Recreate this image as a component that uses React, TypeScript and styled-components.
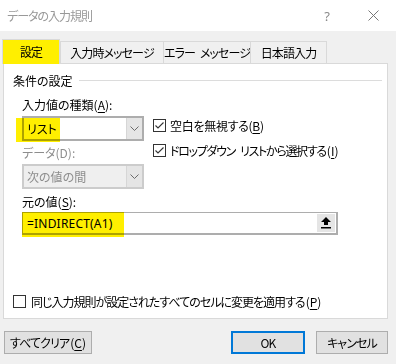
import React from "react";
import styled, { createGlobalStyle } from "styled-components";

const GlobalStyle = createGlobalStyle`
  html, body {
    margin: 0;
    padding: 0;
  }
  body {
    width: 396px;
    height: 364px;
    overflow: hidden;
    background: #f0f0f0;
    font-family: "Noto Sans CJK JP", "Noto Sans", sans-serif;
    font-size: 12px;
    font-feature-settings: "palt" 1;
    color: #000;
  }
`;

const Window = styled.div`
  width: 396px;
  height: 364px;
  display: flex;
  flex-direction: column;
  background: #f0f0f0;
`;

const TitleBar = styled.div`
  height: 31px;
  flex-shrink: 0;
  display: flex;
  align-items: center;
  background: #fff;
`;

const Title = styled.div`
  flex: 1;
  padding-left: 7px;
  color: #999;
  line-height: 16px;
  letter-spacing: -1px;
`;

const CaptionButton = styled.div`
  width: 46px;
  height: 31px;
  display: flex;
  align-items: center;
  justify-content: center;
  color: #8a8a8a;
  font-family: "Noto Sans", sans-serif;
  font-size: 13px;
`;

const Body = styled.div`
  flex: 1;
  padding: 8px 8px 0 2px;
  display: flex;
  flex-direction: column;
`;

const TabStrip = styled.div`
  height: 25px;
  display: flex;
  align-items: flex-end;
  margin-bottom: -1px;
  position: relative;
  z-index: 1;
`;

const Tab = styled.div<{ $active?: boolean; $w: number }>`
  width: ${(p) => p.$w}px;
  box-sizing: border-box;
  height: ${(p) => (p.$active ? 25 : 22)}px;
  margin-bottom: ${(p) => (p.$active ? 0 : 1)}px;
  margin-left: ${(p) => (p.$active ? 0 : -1)}px;
  &:nth-child(2) {
    margin-left: 0;
  }
  border: 1px solid #d9d9d9;
  border-bottom: none;
  background: ${(p) => (p.$active ? "#ffef00" : "#f0f0f0")};
  display: flex;
  align-items: center;
  justify-content: center;
  padding-bottom: ${(p) => (p.$active ? 2 : 0)}px;
  letter-spacing: -0.9px;
  white-space: nowrap;
`;

const Panel = styled.div`
  height: 256px;
  box-sizing: border-box;
  margin-left: 1px;
  background: #fff;
  border: 1px solid #d9d9d9;
  display: flex;
  flex-direction: column;
`;

const GroupHeader = styled.div`
  margin-top: 8px;
  height: 16px;
  padding-left: 9px;
  padding-right: 5px;
  display: flex;
  align-items: center;
  &::after {
    content: "";
    flex: 1;
    height: 1px;
    margin-left: 6px;
    background: #dcdcdc;
  }
`;

const Form = styled.div`
  padding-left: 18px;
  margin-top: 9px;
  display: flex;
  flex-direction: column;
`;

const Columns = styled.div`
  display: flex;
`;

const LeftCol = styled.div`
  width: 122px;
  display: flex;
  flex-direction: column;
`;

const RightCol = styled.div`
  margin-left: 9px;
  padding-top: 20px;
  display: flex;
  flex-direction: column;
  gap: 9px;
`;

const Label = styled.div<{ $disabled?: boolean; $gap?: number }>`
  height: 16px;
  line-height: 16px;
  margin-top: ${(p) => p.$gap ?? 0}px;
  color: ${(p) => (p.$disabled ? "#8d8d8d" : "#000")};
  white-space: nowrap;
`;

const Key = styled.span`
  text-decoration: underline;
  text-underline-offset: 2px;
`;

const Paren = styled.span`
  letter-spacing: 0;
  margin-left: 1px;
`;

const WordGap = styled.span`
  display: inline-block;
  width: 5px;
`;

const Combo = styled.div<{ $disabled?: boolean }>`
  position: relative;
  margin-top: 3px;
  height: 25px;
  box-sizing: border-box;
  border: 2px solid ${(p) => (p.$disabled ? "#cccccc" : "#adadad")};
  background: ${(p) => (p.$disabled ? "#efefef" : "#fff")};
  color: ${(p) => (p.$disabled ? "#8d8d8d" : "#000")};
  display: flex;
  align-items: center;
`;

const ComboText = styled.div`
  flex: 1;
  padding-left: 3px;
  position: relative;
  z-index: 1;
`;

const ComboArrow = styled.div`
  width: 15px;
  align-self: stretch;
  border-left: 1px solid #d6d6d6;
  background: #e5e5e5;
  display: flex;
  align-items: center;
  justify-content: center;
`;

const Marker = styled.div<{ $l: number; $t: number; $w: number; $h: number }>`
  position: absolute;
  left: ${(p) => p.$l}px;
  top: ${(p) => p.$t}px;
  width: ${(p) => p.$w}px;
  height: ${(p) => p.$h}px;
  background: #ffef00;
  mix-blend-mode: multiply;
  pointer-events: none;
`;

const CheckRow = styled.div<{ $ls?: number }>`
  height: 16px;
  display: flex;
  align-items: center;
  gap: 4px;
  white-space: nowrap;
  letter-spacing: ${(p) => p.$ls ?? 0}px;
`;

const SourceBox = styled.div`
  position: relative;
  margin-top: 2px;
  width: 316px;
  height: 23px;
  box-sizing: border-box;
  border: 2px solid #adadad;
  border-left-width: 1px;
  border-top-width: 1px;
  background: #fff;
  display: flex;
  align-items: center;
`;

const SourceText = styled.div`
  flex: 1;
  padding-left: 4px;
  font-family: "Noto Sans", "Noto Sans CJK JP", sans-serif;
  font-size: 12px;
  letter-spacing: 0.2px;
`;

const RefButton = styled.div`
  width: 18px;
  height: 18px;
  margin-right: 1px;
  background: #e5e5e5;
  display: flex;
  align-items: center;
  justify-content: center;
`;

const BottomCheck = styled(CheckRow)`
  margin-top: auto;
  margin-bottom: 9px;
  padding-left: 9px;
  gap: 5px;
`;

const Footer = styled.div`
  margin-top: 12px;
  display: flex;
  align-items: center;
  padding-left: 2px;
`;

const Button = styled.div<{ $primary?: boolean; $w: number }>`
  width: ${(p) => p.$w}px;
  height: 23px;
  box-sizing: border-box;
  border: ${(p) => (p.$primary ? "2px solid #0078d7" : "1px solid #adadad")};
  background: #e1e1e1;
  display: flex;
  align-items: center;
  justify-content: center;
  white-space: nowrap;
  letter-spacing: -0.9px;
  & + & {
    margin-left: 11px;
  }
`;

const Spacer = styled.div`
  flex: 1;
`;

const Chevron = () => (
  <svg width="9" height="5" viewBox="0 0 9 5">
    <polyline points="0.5,0.5 4.5,4.5 8.5,0.5" fill="none" stroke="#6b6b6b" strokeWidth="1" />
  </svg>
);

const CheckBox = ({ checked }: { checked?: boolean }) => (
  <svg width="13" height="13" viewBox="0 0 13 13" style={{ flexShrink: 0 }}>
    <rect x="0.5" y="0.5" width="12" height="12" fill="#fff" stroke="#333" />
    {checked && (
      <polyline points="2.5,6.5 5,9 10.5,3.5" fill="none" stroke="#333" strokeWidth="1.1" />
    )}
  </svg>
);

const CloseIcon = () => (
  <svg width="11" height="11" viewBox="0 0 11 11">
    <path d="M0.5 0.5 L10.5 10.5 M10.5 0.5 L0.5 10.5" stroke="#777" strokeWidth="1" />
  </svg>
);

const RefIcon = () => (
  <svg width="10" height="12" viewBox="0 0 10 12">
    <polygon points="5,0 10,5 7,5 7,8 3,8 3,5 0,5" fill="#000" />
    <rect x="0" y="10" width="10" height="1.5" fill="#000" />
  </svg>
);

export default function App() {
  return (
    <>
      <GlobalStyle />
      <Window>
        <TitleBar>
          <Title>データの入力規則</Title>
          <CaptionButton>?</CaptionButton>
          <CaptionButton>
            <CloseIcon />
          </CaptionButton>
        </TitleBar>
        <Body>
          <TabStrip>
            <Tab $active $w={58}>設定</Tab>
            <Tab $w={104}>入力時メッセージ</Tab>
            <Tab $w={88}>
              エラー<WordGap />メッセージ
            </Tab>
            <Tab $w={77}>日本語入力</Tab>
          </TabStrip>
          <Panel>
            <GroupHeader>条件の設定</GroupHeader>
            <Form>
              <Columns>
                <LeftCol>
                  <Label>
                    入力値の種類(<Key>A</Key>):
                  </Label>
                  <Combo>
                    <Marker $l={-8} $t={0} $w={44} $h={24} />
                    <ComboText>リスト</ComboText>
                    <ComboArrow>
                      <Chevron />
                    </ComboArrow>
                  </Combo>
                  <Label $disabled $gap={4}>
                    データ(D):
                  </Label>
                  <Combo $disabled>
                    <ComboText>次の値の間</ComboText>
                    <ComboArrow>
                      <Chevron />
                    </ComboArrow>
                  </Combo>
                </LeftCol>
                <RightCol>
                  <CheckRow $ls={-0.3}>
                    <CheckBox checked />
                    <span>
                      空白を無視する(<Key>B</Key>)
                    </span>
                  </CheckRow>
                  <CheckRow $ls={-1.3}>
                    <CheckBox checked />
                    <span>
                      ドロップダウン<WordGap />リストから選択する
                      <Paren>
                        (<Key>I</Key>)
                      </Paren>
                    </span>
                  </CheckRow>
                </RightCol>
              </Columns>
              <Label $gap={5}>
                元の値(<Key>S</Key>):
              </Label>
              <SourceBox>
                <Marker $l={-1} $t={-1} $w={102} $h={25} />
                <SourceText>=INDIRECT(A1)</SourceText>
                <RefButton>
                  <RefIcon />
                </RefButton>
              </SourceBox>
            </Form>
            <BottomCheck $ls={-1}>
              <CheckBox />
              <span>
                同じ入力規則が設定されたすべてのセルに変更を適用する
                <Paren>
                  (<Key>P</Key>)
                </Paren>
              </span>
            </BottomCheck>
          </Panel>
          <Footer>
            <Button $w={88}>
              すべてクリア
              <Paren>
                (<Key>C</Key>)
              </Paren>
            </Button>
            <Spacer />
            <Button $primary $w={74}>
              OK
            </Button>
            <Button $w={72}>キャンセル</Button>
          </Footer>
        </Body>
      </Window>
    </>
  );
}
